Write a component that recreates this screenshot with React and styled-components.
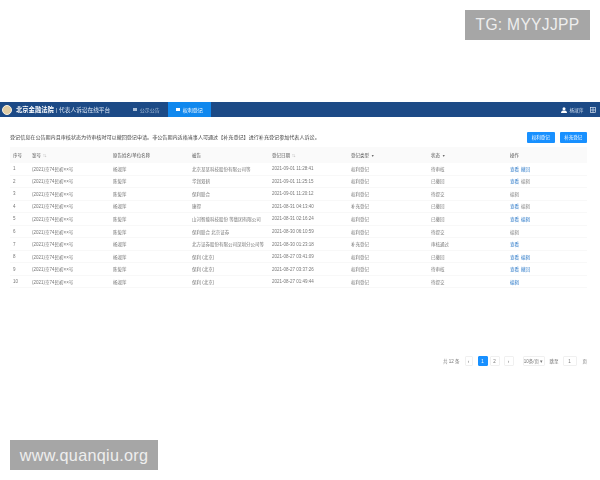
import React from 'react'
import styled, { createGlobalStyle } from 'styled-components'

const GlobalStyle = createGlobalStyle`
  html, body { margin: 0; padding: 0; background: #fff; }
  body { font-family: "Liberation Sans", "Noto Sans CJK SC", sans-serif; }
`

const rows = [
  { plaintiff: '杨淑萍', defendant: '北京某某科技股份有限公司等', date: '2021-09-01 11:28:41', type: '权利登记', status: '待审核', ops: [['查看', 1], ['撤回', 1]] },
  { plaintiff: '陈俊萍', defendant: '华润双鹤', date: '2021-09-01 11:25:15', type: '权利登记', status: '已撤回', ops: [['查看', 1], ['编辑', 0]] },
  { plaintiff: '陈俊萍', defendant: '保利联合', date: '2021-09-01 11:20:12', type: '权利登记', status: '待提交', ops: [['编辑', 0]] },
  { plaintiff: '杨淑萍', defendant: '康得', date: '2021-08-31 04:13:40', type: '补充登记', status: '已撤回', ops: [['查看', 1], ['编辑', 0]] },
  { plaintiff: '陈俊萍', defendant: '山河智能科技股份 等集团有限公司', date: '2021-08-31 02:16:24', type: '权利登记', status: '已撤回', ops: [['查看', 1], ['编辑', 1]] },
  { plaintiff: '陈俊萍', defendant: '保利联合 北京证券', date: '2021-08-30 06:10:59', type: '权利登记', status: '待提交', ops: [['编辑', 0]] },
  { plaintiff: '杨淑萍', defendant: '北方证券股份有限公司深圳分公司等', date: '2021-08-30 01:23:18', type: '补充登记', status: '审核通过', ops: [['查看', 1]] },
  { plaintiff: '杨淑萍', defendant: '保利 (北京)', date: '2021-08-27 03:41:09', type: '权利登记', status: '已撤回', ops: [['查看', 1], ['编辑', 1]] },
  { plaintiff: '陈俊萍', defendant: '保利 (北京)', date: '2021-08-27 03:37:26', type: '权利登记', status: '待审核', ops: [['查看', 1], ['撤回', 1]] },
  { plaintiff: '杨淑萍', defendant: '保利 (北京)', date: '2021-08-27 01:49:44', type: '权利登记', status: '待提交', ops: [['编辑', 1]] },
]

const Page = styled.div`
  position: relative;
  width: 600px;
  height: 480px;
  padding-top: 102px;
  box-sizing: border-box;
  overflow: hidden;
  background: #fff;
`

const Blurred = styled.div`
  filter: blur(0.55px);
`

const Header = styled.header`
  height: 15px;
  background: #1c4a86;
  display: flex;
  align-items: center;
  color: #fff;
  padding: 0 4px 0 2px;
`

const Logo = styled.span`
  width: 10px;
  height: 10px;
  border-radius: 50%;
  background: #e0cca3;
  border: 1.5px solid #f6f1e4;
  box-sizing: border-box;
  margin-right: 4px;
`

const Brand = styled.strong`
  font-size: 6.3px;
  font-weight: 700;
  width: 40px;
  white-space: nowrap;
`

const Tagline = styled.span`
  font-size: 5.7px;
  width: 69px;
  white-space: nowrap;
  color: #dbe5f2;
`

const Tab = styled.div`
  height: 15px;
  width: 43px;
  display: flex;
  align-items: center;
  justify-content: center;
  gap: 3px;
  font-size: 5px;
  background: ${(p) => (p.$active ? '#1088ee' : 'transparent')};
  color: ${(p) => (p.$active ? '#fff' : '#a9bdd6')};
  &::before {
    content: '';
    width: 3.5px;
    height: 3px;
    background: currentColor;
  }
`

const UserArea = styled.div`
  margin-left: auto;
  display: flex;
  align-items: center;
  font-size: 4.7px;
  color: #cbd8ea;
  gap: 2.5px;
`

const GridIcon = styled.svg`
  margin-left: 4px;
  display: block;
`

const Content = styled.main`
  padding: 14px 13px 0 10px;
`

const Notice = styled.div`
  display: flex;
  align-items: center;
  justify-content: space-between;
  height: 12px;
  font-size: 5.08px;
  color: #444;
  white-space: nowrap;
`

const NoticeText = styled.span`
  padding-bottom: 1.5px;
`

const Buttons = styled.div`
  display: flex;
  gap: 5px;
`

const Button = styled.button`
  width: 27.5px;
  height: 11px;
  padding: 0;
  border: 0;
  border-radius: 1px;
  background: #1890ff;
  color: #fff;
  font: 4.5px "Liberation Sans", "Noto Sans CJK SC", sans-serif;
`

const Table = styled.div`
  margin-top: 4px;
  font-size: 4.5px;
  color: #777;
`

const columns = '19px 81px 79px 80px 79px 80px 79px 1fr'

const HeadRow = styled.div`
  display: grid;
  grid-template-columns: ${columns};
  height: 16px;
  padding-bottom: 1px;
  box-sizing: border-box;
  align-items: center;
  background: #fafafa;
  color: #555;
  padding-left: 3px;
`

const Row = styled.div`
  display: grid;
  grid-template-columns: ${columns};
  height: 12.55px;
  align-items: center;
  border-bottom: 0.5px solid #f8f8f8;
  box-sizing: border-box;
  padding-left: 3px;
`

const Cell = styled.div`
  white-space: nowrap;
  overflow: hidden;
`

const Sort = styled.span`
  font-size: 3.5px;
  margin-left: 2px;
  color: ${(p) => (p.$dark ? '#666' : '#bbb')};
`

const Ops = styled.div`
  display: flex;
  gap: 2px;
`

const Op = styled.span`
  color: ${(p) => (p.$link ? '#2a78c8' : '#888')};
`

const Pager = styled.nav`
  margin-top: 68px;
  display: flex;
  justify-content: flex-end;
  align-items: center;
  font-size: 4.5px;
  color: #777;
  height: 10px;
`

const PagerLabel = styled.span`
  margin-right: ${(p) => p.$gap || 0}px;
`

const PageBox = styled.span`
  width: ${(p) => p.$width || 10}px;
  height: 10px;
  box-sizing: border-box;
  margin-right: ${(p) => p.$gap ?? 4}px;
  display: flex;
  align-items: center;
  justify-content: center;
  border: 0.5px solid ${(p) => (p.$active ? '#1890ff' : '#f0f0f0')};
  background: ${(p) => (p.$active ? '#1890ff' : 'transparent')};
  color: ${(p) => (p.$active ? '#fff' : '#777')};
  border-radius: 1px;
`

const Watermark = styled.div`
  position: absolute;
  height: 30px;
  display: flex;
  align-items: center;
  justify-content: center;
  background: #a6a6a6;
  color: #eeeeee;
  font-family: "Liberation Sans", sans-serif;
  letter-spacing: 0.3px;
  ${(p) => (p.$top ? 'top: 10px; right: 10px; width: 125px; font-size: 15.6px;' : 'left: 10px; bottom: 10px; width: 148px; font-size: 16.2px;')}
`

export default function App() {
  return (
    <Page>
      <GlobalStyle />
      <Blurred>
        <Header>
          <Logo />
          <Brand>北京金融法院</Brand>
          <Tagline>| 代表人诉讼在线平台</Tagline>
          <Tab>公示公告</Tab>
          <Tab $active>权利登记</Tab>
          <UserArea>
            <svg width="6" height="6" viewBox="0 0 12 12" fill="#fff">
              <circle cx="6" cy="3.5" r="3" />
              <path d="M0 12c0-4 3-5 6-5s6 1 6 5z" />
            </svg>
            <span>杨淑萍</span>
            <GridIcon width="6" height="6" viewBox="0 0 12 12" fill="none" stroke="#e5edf7" strokeWidth="1.3">
              <rect x="1" y="1" width="10" height="10" />
              <path d="M6 1v10M1 6h10" />
            </GridIcon>
          </UserArea>
        </Header>
        <Content>
          <Notice>
            <NoticeText>登记信息在公告期内且审核状态为待审核时可以撤回登记申请。非公告期内适格当事人可通过【补充登记】进行补充登记参加代表人诉讼。</NoticeText>
            <Buttons>
              <Button>权利登记</Button>
              <Button>补充登记</Button>
            </Buttons>
          </Notice>
          <Table>
            <HeadRow>
              <Cell>序号</Cell>
              <Cell>案号<Sort>⇅</Sort></Cell>
              <Cell>原告姓名/单位名称</Cell>
              <Cell>被告</Cell>
              <Cell>登记日期<Sort>⇅</Sort></Cell>
              <Cell>登记类型<Sort $dark>▼</Sort></Cell>
              <Cell>状态<Sort $dark>▼</Sort></Cell>
              <Cell>操作</Cell>
            </HeadRow>
            {rows.map((row, i) => (
              <Row key={i}>
                <Cell>{i + 1}</Cell>
                <Cell>(2021)京74民初××号</Cell>
                <Cell>{row.plaintiff}</Cell>
                <Cell>{row.defendant}</Cell>
                <Cell>{row.date}</Cell>
                <Cell>{row.type}</Cell>
                <Cell>{row.status}</Cell>
                <Ops>
                  {row.ops.map(([label, link]) => (
                    <Op key={label} $link={link}>{label}</Op>
                  ))}
                </Ops>
              </Row>
            ))}
          </Table>
          <Pager>
            <PagerLabel $gap={5}>共 12 条</PagerLabel>
            <PageBox $width={8} $gap={5}>‹</PageBox>
            <PageBox $active $gap={2}>1</PageBox>
            <PageBox $gap={4}>2</PageBox>
            <PageBox $gap={9}>›</PageBox>
            <PageBox $width={22} $gap={5}>10条/页 ▾</PageBox>
            <PagerLabel $gap={4}>跳至</PagerLabel>
            <PageBox $width={14} $gap={6}>1</PageBox>
            <PagerLabel>页</PagerLabel>
          </Pager>
        </Content>
      </Blurred>
      <Watermark $top>TG: MYYJJPP</Watermark>
      <Watermark>www.quanqiu.org</Watermark>
    </Page>
  )
}
